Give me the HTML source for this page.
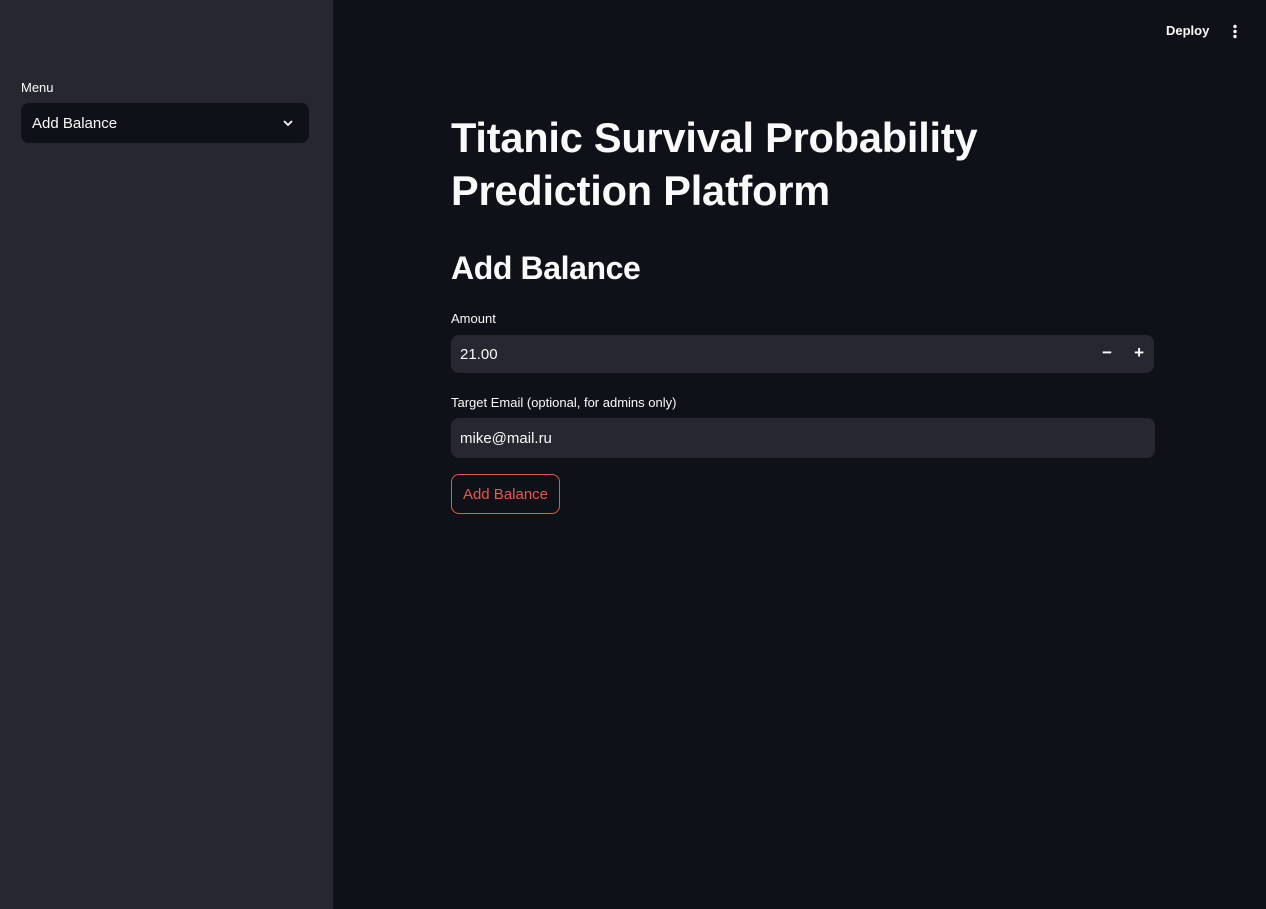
<!DOCTYPE html>
<html><head><style>
*{margin:0;padding:0;box-sizing:border-box}
body{width:1266px;height:909px;background:#0e1117;font-family:"Liberation Sans",sans-serif;color:#fafafa;position:relative;overflow:hidden}
.sb{position:absolute;left:0;top:0;width:333px;height:909px;background:#262730}
.lbl{position:absolute;font-size:13px;}
.box{position:absolute;border-radius:8px;font-size:15px;display:flex;align-items:center;padding-left:9px}
</style></head><body>
<div class="sb">
<div class="lbl" style="left:21px;top:80px">Menu</div>
<div class="box" style="left:21px;top:103px;width:288px;height:40px;background:#0e1117;padding-left:11px">Add Balance
<svg style="position:absolute;right:15px;top:14px" width="12" height="12" viewBox="0 0 12 12"><path d="M2 4l4 4 4-4" stroke="#fafafa" stroke-width="1.8" fill="none"/></svg></div>
</div>
<div style="position:absolute;left:1166px;top:23px;font-size:13px;font-weight:bold">Deploy</div>
<svg style="position:absolute;left:1231px;top:24px" width="8" height="16"><circle cx="4" cy="2.5" r="1.7" fill="#fafafa"/><circle cx="4" cy="7.5" r="1.7" fill="#fafafa"/><circle cx="4" cy="12.5" r="1.7" fill="#fafafa"/></svg>
<div style="position:absolute;left:451px;top:111px;font-size:41.5px;font-weight:bold;line-height:53px;letter-spacing:-0.2px">Titanic Survival Probability<br>Prediction Platform</div>
<div style="position:absolute;left:451px;top:250px;font-size:32px;font-weight:bold;letter-spacing:-0.4px">Add Balance</div>
<div class="lbl" style="left:451px;top:311px">Amount</div>
<div class="box" style="left:451px;top:335px;width:703px;height:38px;background:#262730">21.00
<span style="position:absolute;right:42px;top:8px;font-size:17px;font-weight:bold">−</span>
<span style="position:absolute;right:10px;top:8px;font-size:17px;font-weight:bold">+</span></div>
<div class="lbl" style="left:451px;top:395px">Target Email (optional, for admins only)</div>
<div class="box" style="left:451px;top:418px;width:704px;height:40px;background:#262730">mike@mail.ru</div>
<div style="position:absolute;left:451px;top:474px;width:109px;height:40px;border:1px solid #e8574c;border-radius:8px;color:#e8574c;font-size:15px;display:flex;align-items:center;justify-content:center">Add Balance</div>
</body></html>
